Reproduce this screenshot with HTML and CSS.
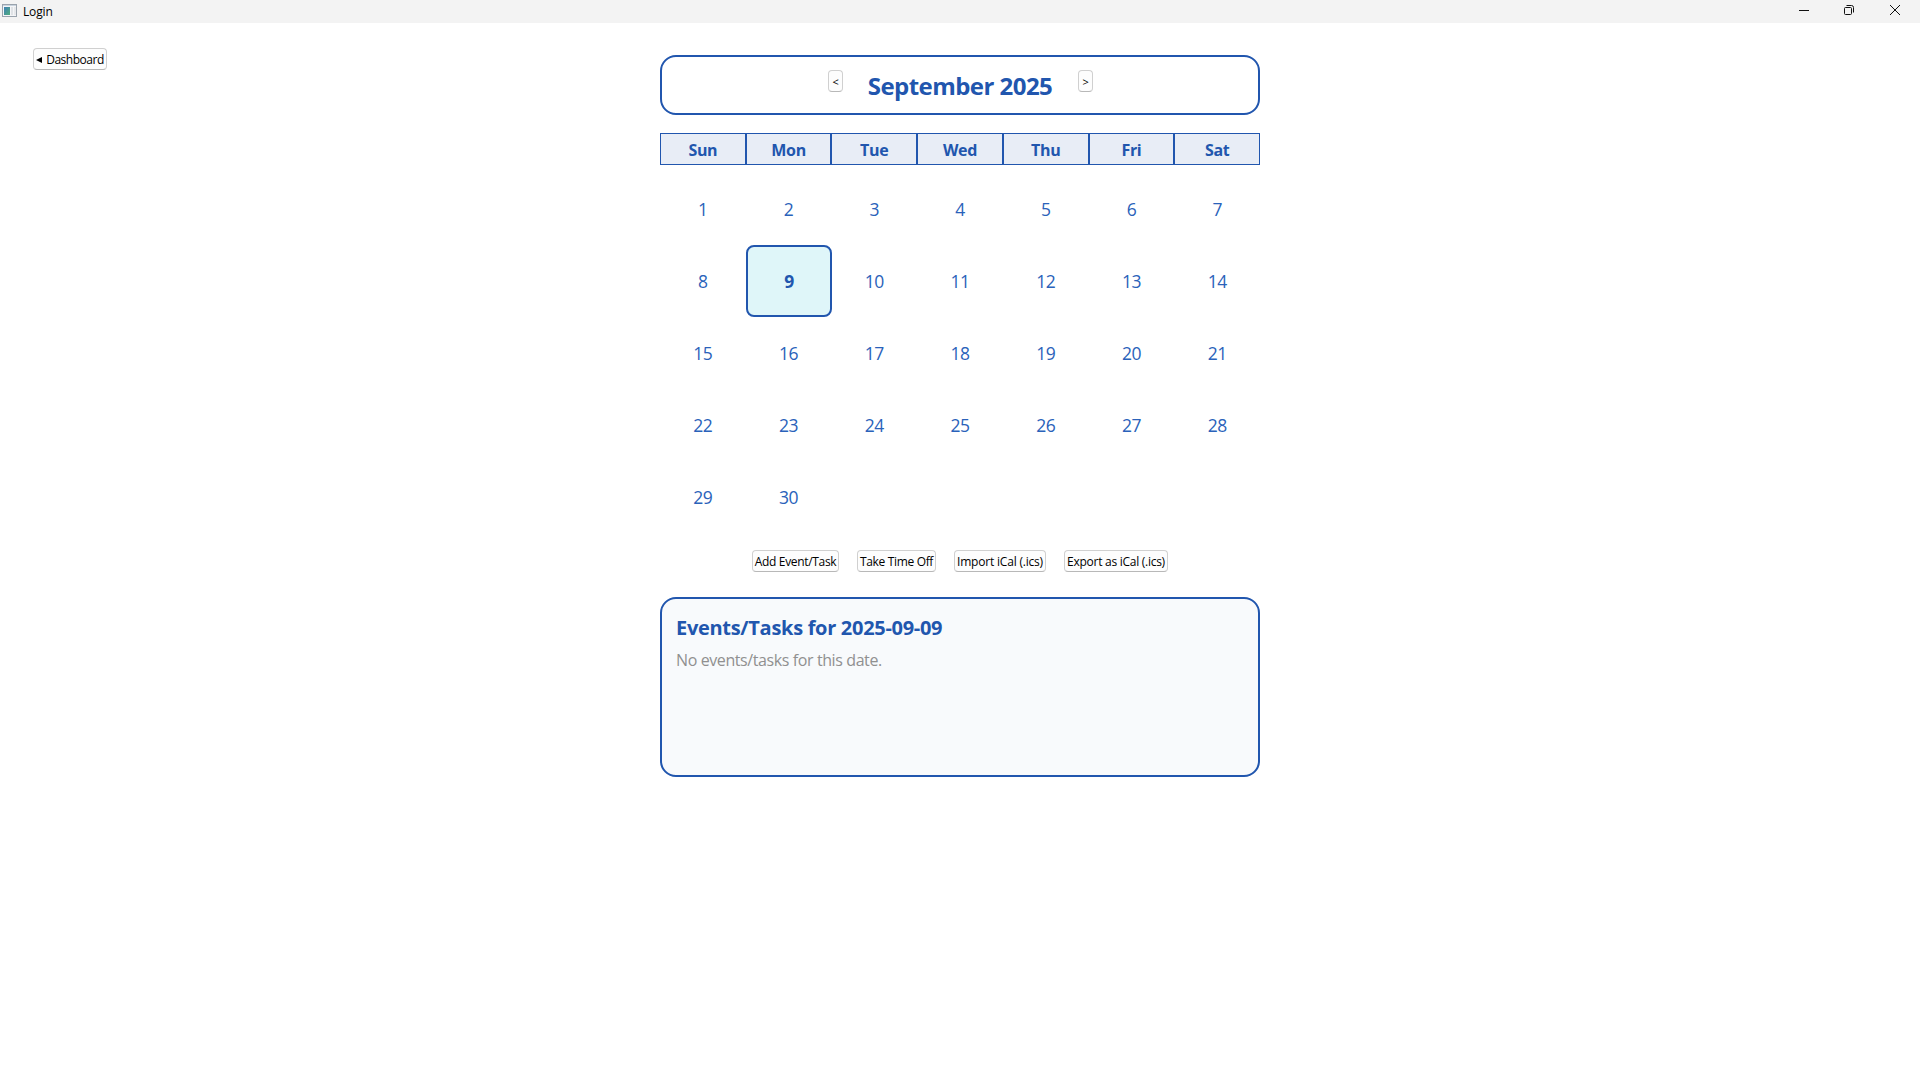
FILE: index.html
```html
<!DOCTYPE html>
<html lang="en">
<head>
<meta charset="utf-8">
<title>Login</title>
<link rel="stylesheet" href="styles.css">
</head>
<body>
<header class="titlebar">
  <svg class="app-icon" width="16" height="16" viewBox="0 0 16 16">
    <defs><linearGradient id="pane" x1="0" y1="0" x2="1" y2="1"><stop offset="0" stop-color="#3f7fb5"/><stop offset="1" stop-color="#4fae7c"/></linearGradient></defs>
    <rect x="0.5" y="1.5" width="14" height="12" fill="#f4f5f7" stroke="#9aa3ad"/>
    <rect x="1" y="2" width="13" height="1" fill="#c9d3de"/>
    <rect x="2" y="4" width="6" height="8" fill="url(#pane)"/>
    <rect x="9" y="4" width="2" height="8" fill="#dfe2e6"/>
    <rect x="12" y="4" width="2" height="8" fill="#e6e8eb"/>
  </svg>
  <span class="app-name">Login</span>
  <div class="window-controls">
    <svg width="12" height="12" viewBox="0 0 12 12"><path d="M1 6.5H11"/></svg>
    <svg width="12" height="12" viewBox="0 0 12 12"><rect x="1.5" y="3.5" width="7" height="7" rx="1"/><path d="M3.5 1.5H8.5A2 2 0 0 1 10.5 3.5V8.5"/></svg>
    <svg class="close" width="12" height="12" viewBox="0 0 12 12"><path d="M1 1L11 11M11 1L1 11"/></svg>
  </div>
</header>
<div class="page">
  <nav class="side">
    <button class="btn back"><svg width="6" height="6" viewBox="0 0 6 6"><path d="M0 3L6 0V6Z"/></svg>Dashboard</button>
  </nav>
  <main class="calendar">
    <section class="month">
      <button class="btn">&lt;</button>
      <h1 class="month-name">September 2025</h1>
      <button class="btn">&gt;</button>
    </section>
    <div class="weekdays">
      <div>Sun</div><div>Mon</div><div>Tue</div><div>Wed</div><div>Thu</div><div>Fri</div><div>Sat</div>
    </div>
    <div class="days">
      <div>1</div><div>2</div><div>3</div><div>4</div><div>5</div><div>6</div><div>7</div>
      <div>8</div><div class="selected">9</div><div>10</div><div>11</div><div>12</div><div>13</div><div>14</div>
      <div>15</div><div>16</div><div>17</div><div>18</div><div>19</div><div>20</div><div>21</div>
      <div>22</div><div>23</div><div>24</div><div>25</div><div>26</div><div>27</div><div>28</div>
      <div>29</div><div>30</div>
    </div>
    <div class="actions">
      <button class="btn add">Add Event/Task</button>
      <button class="btn leave">Take Time Off</button>
      <button class="btn import">Import iCal (.ics)</button>
      <button class="btn export">Export as iCal (.ics)</button>
    </div>
    <section class="events">
      <h2 class="events-title">Events/Tasks for 2025-09-09</h2>
      <p class="events-empty">No events/tasks for this date.</p>
    </section>
  </main>
</div>
</body>
</html>
```
FILE: styles.css
```css
* { box-sizing: border-box; }

body {
  margin: 0;
  height: 100vh;
  overflow: hidden;
  background: #fff;
  color: #000;
  font-family: "Open Sans", "Noto Sans", sans-serif;
}

h1, h2, p { margin: 0; }

.titlebar {
  display: flex;
  align-items: center;
  height: 23px;
  padding: 0 19px 0 2px;
  background: #f3f3f3;
}
.app-icon { margin-top: -1px; }
.app-name {
  margin-left: 5px;
  font-size: 12px;
  line-height: 23px;
  letter-spacing: -0.15px;
}
.window-controls {
  display: flex;
  gap: 33px;
  margin: -3px 0 0 auto;
}
.window-controls svg { fill: none; stroke: #111; stroke-width: 1; }
.window-controls .close { margin-left: 1px; }

.page {
  display: grid;
  grid-template-columns: 660px 600px 1fr;
}
.side { padding: 25px 0 0 33px; }

.btn {
  display: flex;
  justify-content: center;
  align-items: center;
  height: 22px;
  padding: 1px 0 0;
  border: 1px solid #d0d0d0;
  border-bottom-color: #b8b8b8;
  border-radius: 4px;
  background: #fdfdfd;
  color: #000;
  font-family: inherit;
  font-size: 12px;
  line-height: 20px;
  letter-spacing: -0.33px;
  white-space: nowrap;
}
.back { width: 74px; gap: 4px; letter-spacing: -0.47px; }

.calendar { padding-top: 32px; }

.month {
  display: grid;
  grid-template-columns: 15px 235px 15px;
  justify-content: center;
  align-items: start;
  height: 60px;
  padding: 13px 0 0 1px;
  border: 2px solid #2156ae;
  border-radius: 16px;
}
.month .btn { font-size: 11px; padding-top: 2px; }
.month-name {
  padding-right: 1px;
  color: #2156ae;
  font-size: 24px;
  line-height: 32px;
  letter-spacing: -0.54px;
  text-align: center;
}

.weekdays, .days {
  display: grid;
  grid-template-columns: repeat(7, 1fr);
  color: #2156ae;
  text-align: center;
}
.weekdays {
  margin-top: 18px;
  font-size: 16px;
  font-weight: 700;
  line-height: 28px;
  letter-spacing: -0.3px;
}
.weekdays div {
  padding-top: 2px;
  border: 1px solid #2156ae;
  background: #e8edf6;
}

.days {
  grid-auto-rows: 72px;
  margin-top: 8px;
  color: #2a62ba;
  font-size: 17.5px;
  line-height: 73px;
  letter-spacing: -0.5px;
}
.days .selected {
  margin-right: -1px;
  border: 2px solid #2156ae;
  border-radius: 8px;
  background: #dff6f9;
  color: #2156ae;
  font-weight: 700;
  line-height: 69px;
}

.actions {
  display: flex;
  justify-content: center;
  gap: 18px;
  margin-top: 17px;
}
.add { width: 87px; }
.leave { width: 79px; }
.import { width: 92px; letter-spacing: -0.2px; }
.export { width: 104px; letter-spacing: -0.27px; }

.events {
  height: 180px;
  margin-top: 25px;
  padding: 15px 14px;
  border: 2px solid #2156ae;
  border-radius: 16px;
  background: #f8fafc;
}
.events-title {
  color: #2156ae;
  font-size: 20px;
  line-height: 28px;
  letter-spacing: -0.3px;
}
.events-empty {
  margin-top: 7px;
  color: #909090;
  font-size: 16px;
  line-height: 22px;
  letter-spacing: -0.4px;
}
```
